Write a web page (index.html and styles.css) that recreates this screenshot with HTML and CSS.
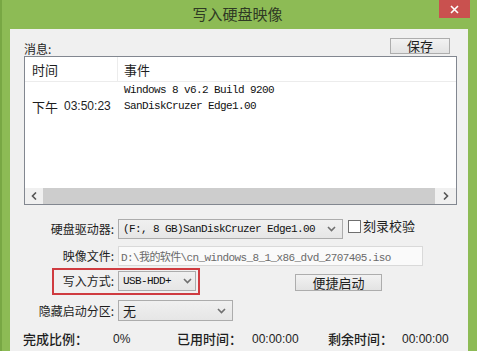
FILE: index.html
```html
<!DOCTYPE html>
<html lang="zh-CN">
<head>
    <meta charset="UTF-8">
    <meta name="viewport" content="width=device-width, initial-scale=1.0">
    <title>写入硬盘映像</title>
    <link rel="stylesheet" href="styles.css">
</head>
<body>
    <div class="window">
        <!-- Title bar -->
        <div class="titlebar">
            <div class="title">写入硬盘映像</div>
            <div class="close-btn">
                <svg width="9" height="9" viewBox="0 0 9 9"><path d="M1 1 L8 8 M8 1 L1 8" stroke="#fff" stroke-width="1.6" fill="none"/></svg>
            </div>
        </div>

        <div class="client">
            <div class="msg-head">
                <span class="msg-label">消息:</span>
                <div class="btn btn-save">保存</div>
            </div>

            <!-- Message list -->
            <div class="listbox">
                <div class="list-header">
                    <div class="col-time">时间</div>
                    <div class="col-event">事件</div>
                </div>
                <div class="list-body">
                    <div class="list-row">
                        <div class="col-time"></div>
                        <div class="col-event mono">Windows 8 v6.2 Build 9200</div>
                    </div>
                    <div class="list-row">
                        <div class="col-time">下午 <span class="num">03:50:23</span></div>
                        <div class="col-event mono">SanDiskCruzer Edge1.00</div>
                    </div>
                </div>
                <div class="hscroll">
                    <div class="arrow arrow-left">
                        <svg width="6" height="8" viewBox="0 0 6 8"><path d="M5 0.5 L1.5 4 L5 7.5" stroke="#555" stroke-width="1.6" fill="none"/></svg>
                    </div>
                    <div class="thumb"></div>
                    <div class="arrow arrow-right">
                        <svg width="6" height="8" viewBox="0 0 6 8"><path d="M1 0.5 L4.5 4 L1 7.5" stroke="#555" stroke-width="1.6" fill="none"/></svg>
                    </div>
                </div>
            </div>

            <!-- Options -->
            <div class="form">
                <div class="form-row row-drive">
                    <div class="form-label">硬盘驱动器:</div>
                    <div class="combo combo-drive">
                        <span class="mono">(F:, 8 GB)SanDiskCruzer Edge1.00</span>
                        <svg class="chevron" width="9" height="6" viewBox="0 0 9 6"><path d="M1 1 L4.5 4.5 L8 1" stroke="#707070" stroke-width="1.6" fill="none"/></svg>
                    </div>
                    <div class="checkbox"></div>
                    <span class="check-label">刻录校验</span>
                </div>
                <div class="form-row row-image">
                    <div class="form-label">映像文件:</div>
                    <div class="textbox mono">D:\我的软件\cn_windows_8_1_x86_dvd_2707405.iso</div>
                </div>
                <div class="form-row row-write">
                    <div class="highlight">
                        <div class="form-label">写入方式:</div>
                        <div class="combo combo-write">
                            <span class="mono">USB-HDD+</span>
                            <svg class="chevron" width="9" height="6" viewBox="0 0 9 6"><path d="M1 1 L4.5 4.5 L8 1" stroke="#707070" stroke-width="1.6" fill="none"/></svg>
                        </div>
                    </div>
                    <div class="btn btn-boot">便捷启动</div>
                </div>
                <div class="form-row row-hidden">
                    <div class="form-label">隐藏启动分区:</div>
                    <div class="combo combo-hidden">
                        <span class="combo-text">无</span>
                        <svg class="chevron" width="9" height="6" viewBox="0 0 9 6"><path d="M1 1 L4.5 4.5 L8 1" stroke="#707070" stroke-width="1.6" fill="none"/></svg>
                    </div>
                </div>
            </div>

            <!-- Progress -->
            <div class="stats">
                <span class="stat-label">完成比例：</span>
                <span class="num">0%</span>
                <span class="stat-label">已用时间：</span>
                <span class="num">00:00:00</span>
                <span class="stat-label">剩余时间：</span>
                <span class="num">00:00:00</span>
            </div>
        </div>
    </div>
</body>
</html>
```

FILE: styles.css
```css
body {
    margin: 0;
    overflow: hidden;
    font-family: "Noto Sans CJK SC", "Noto Sans", sans-serif;
    font-size: 12px;
    color: #1e1e1e;
}
.window {
    width: 477px;
    height: 351px;
    display: flex;
    flex-direction: column;
    background: #8dbb55;
    border-left: 2px solid #78a744;
    box-sizing: border-box;
}
.titlebar {
    height: 29px;
    display: grid;
    grid-template-columns: 1fr auto 1fr;
}
.title {
    grid-column: 2;
    font-size: 15px;
    line-height: 27px;
    color: #2f3a24;
    padding-right: 4px;
}
.close-btn {
    grid-column: 3;
    justify-self: end;
    width: 31px;
    height: 18px;
    margin-right: 7px;
    background: #c9514f;
    display: flex;
    align-items: center;
    justify-content: center;
}
.client {
    flex: 1;
    margin: 0 9px 0 8px;
    background: #f0f0f0;
    display: flex;
    flex-direction: column;
}
.msg-head {
    display: flex;
    justify-content: space-between;
    align-items: flex-end;
    padding: 9px 18px 0 14px;
    height: 16px;
}
.msg-label {
    line-height: 14px;
    margin-bottom: -2px;
}
.btn {
    box-sizing: border-box;
    border: 1px solid #adadad;
    background: linear-gradient(#f2f2f2, #e3e3e3);
    text-align: center;
    font-size: 13px;
}
.btn-save {
    width: 60px;
    height: 16px;
    line-height: 14px;
}
.listbox {
    margin: 2px 11px 0 14px;
    height: 149px;
    box-sizing: border-box;
    border: 1px solid #828790;
    background: #fff;
    display: flex;
    flex-direction: column;
}
.list-header {
    height: 25px;
    box-sizing: border-box;
    border-bottom: 1px solid #ececec;
    display: flex;
    align-items: stretch;
    font-size: 13px;
}
.list-header .col-time {
    border-right: 1px solid #ececec;
}
.col-time {
    width: 93px;
    box-sizing: border-box;
    padding-left: 7px;
    display: flex;
    align-items: center;
    font-size: 13px;
}
.col-event {
    padding-left: 6px;
    display: flex;
    align-items: center;
}
.list-body {
    flex: 1;
}
.list-row {
    height: 16px;
    display: flex;
}
.list-row .col-event {
    padding-left: 6px;
}
.mono {
    font-family: "Liberation Mono", "Noto Sans CJK SC", monospace;
    font-size: 11px;
    letter-spacing: -0.6px;
    color: #111;
}
.num {
    font-family: "Liberation Sans", sans-serif;
    font-size: 12px;
    margin-left: 6px;
}
.hscroll {
    height: 16px;
    display: flex;
    background: #f0f0f0;
}
.arrow {
    display: flex;
    align-items: center;
    justify-content: center;
}
.arrow-left {
    width: 18px;
}
.arrow-right {
    width: 21px;
}
.thumb {
    flex: 1;
    background: #cdcdcd;
}
.form {
    padding-left: 14px;
}
.form-row {
    display: flex;
    align-items: center;
    height: 20px;
}
.form-label {
    width: 90px;
    text-align: right;
    margin-right: 4px;
    font-size: 12px;
    line-height: 16px;
}
.row-drive {
    margin-top: 14px;
}
.row-image {
    margin-top: 7px;
}
.row-write {
    margin-top: 5px;
}
.row-hidden {
    margin-top: 9px;
    height: 21px;
}
.combo {
    height: 100%;
    box-sizing: border-box;
    border: 1px solid #acacac;
    background: linear-gradient(#f0f0f0, #e6e6e6);
    display: flex;
    align-items: center;
    justify-content: space-between;
    padding: 0 6px 0 4px;
}
.combo-drive {
    width: 225px;
}
.combo-write {
    width: 78px;
    height: 20px;
    padding-right: 3px;
}
.combo-hidden {
    width: 115px;
}
.combo-text {
    font-size: 13px;
}
.checkbox {
    width: 13px;
    height: 13px;
    box-sizing: border-box;
    border: 1px solid #6f6f6f;
    background: #fff;
    margin-left: 5px;
    align-self: flex-start;
    margin-top: 1px;
}
.check-label {
    margin-left: 2px;
    font-size: 13px;
    align-self: flex-start;
    line-height: 14px;
}
.textbox {
    width: 305px;
    height: 100%;
    box-sizing: border-box;
    border: 1px solid #d9d9d9;
    background: #fafafa;
    padding-left: 2px;
    display: flex;
    align-items: center;
    color: #6a6a6a;
}
.highlight {
    display: flex;
    align-items: center;
    height: 100%;
    position: relative;
}
.highlight::after {
    content: "";
    position: absolute;
    left: 28px;
    top: -3px;
    right: -4px;
    bottom: -4px;
    border: 2px solid #cf3b40;
}
.btn-boot {
    width: 87px;
    height: 17px;
    line-height: 15px;
    margin-left: 99px;
    margin-top: 3px;
}
.stats {
    margin: 8px 0 0 13px;
    height: 16px;
    display: grid;
    grid-template-columns: 90px 64px 75px 76px 74px auto;
    align-items: center;
    font-size: 13px;
}
.stats .num {
    margin-left: 0;
}
.stat-label {
    font-weight: 500;
}
```
